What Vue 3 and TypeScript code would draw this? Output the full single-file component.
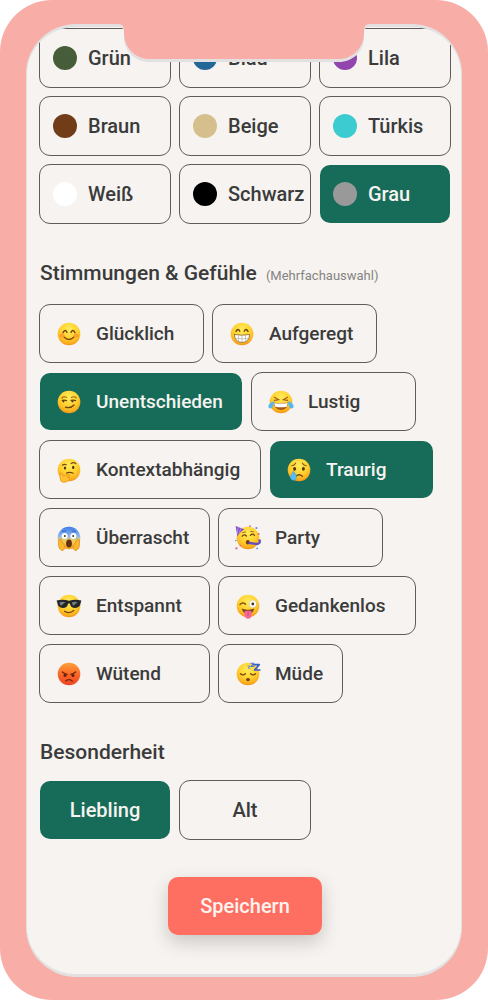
<script setup lang="ts">
import { ref } from 'vue'

type Width = 'small' | 'medium' | 'large' | 'wide' | 'wider' | 'widest'

interface Swatch {
  name: string
  color: string
}

interface Mood {
  name: string
  face: string
  width: Width
}

const swatches: Swatch[] = [
  { name: 'Grün', color: '#475d3a' },
  { name: 'Blau', color: '#236796' },
  { name: 'Lila', color: '#9145ad' },
  { name: 'Braun', color: '#703d18' },
  { name: 'Beige', color: '#d5bf8d' },
  { name: 'Türkis', color: '#3bcbd0' },
  { name: 'Weiß', color: '#ffffff' },
  { name: 'Schwarz', color: '#000000' },
  { name: 'Grau', color: '#999999' },
]

const moodRows: Mood[][] = [
  [
    { name: 'Glücklich', face: 'smile', width: 'medium' },
    { name: 'Aufgeregt', face: 'grin', width: 'medium' },
  ],
  [
    { name: 'Unentschieden', face: 'smirk', width: 'wider' },
    { name: 'Lustig', face: 'joy', width: 'medium' },
  ],
  [
    { name: 'Kontextabhängig', face: 'thinking', width: 'widest' },
    { name: 'Traurig', face: 'cry', width: 'medium' },
  ],
  [
    { name: 'Überrascht', face: 'scream', width: 'large' },
    { name: 'Party', face: 'party', width: 'medium' },
  ],
  [
    { name: 'Entspannt', face: 'cool', width: 'large' },
    { name: 'Gedankenlos', face: 'wink', width: 'wide' },
  ],
  [
    { name: 'Wütend', face: 'angry', width: 'large' },
    { name: 'Müde', face: 'sleep', width: 'small' },
  ],
]

const traits = ['Liebling', 'Alt']

const selected = ref<Set<string>>(new Set(['Grau', 'Unentschieden', 'Traurig', 'Liebling']))

function toggle(name: string): void {
  if (selected.value.has(name)) selected.value.delete(name)
  else selected.value.add(name)
}

function faceFill(face: string): string {
  if (face === 'angry') return 'url(#face-red)'
  if (face === 'scream') return 'url(#face-blue)'
  return 'url(#face-yellow)'
}
</script>

<template>
  <div class="phone">
    <svg class="defs" width="0" height="0" aria-hidden="true">
      <defs>
        <radialGradient id="face-yellow" cx="0.5" cy="0.3" r="0.72">
          <stop offset="0" stop-color="#ffec5c" />
          <stop offset="0.55" stop-color="#ffd02f" />
          <stop offset="0.85" stop-color="#fbad1c" />
          <stop offset="1" stop-color="#ee8b1a" />
        </radialGradient>
        <linearGradient id="face-red" x1="0" y1="0" x2="0" y2="1">
          <stop offset="0" stop-color="#ffa03a" />
          <stop offset="0.5" stop-color="#fa6a28" />
          <stop offset="1" stop-color="#ef4323" />
        </linearGradient>
        <linearGradient id="face-blue" x1="0" y1="0" x2="0" y2="1">
          <stop offset="0" stop-color="#3f79e6" />
          <stop offset="0.4" stop-color="#86b4ee" />
          <stop offset="0.62" stop-color="#f5cf55" />
          <stop offset="1" stop-color="#f7a01e" />
        </linearGradient>
      </defs>
    </svg>

    <svg class="notch" width="256" height="44" viewBox="0 0 256 44" aria-hidden="true">
      <path
        class="notch-rim"
        d="M0 4V7H3Q8 7 8 13V17C8 32 20 42 33 42H223C236 42 248 32 248 17V13Q248 7 253 7H256V4Z"
      />
      <path
        class="notch-body"
        d="M0 0V4H2Q8 4 8 10V13C8 28 20 39 33 39H223C236 39 248 28 248 13V10Q248 4 254 4H256V0Z"
      />
    </svg>

    <main class="screen">
      <section class="swatches" aria-label="Farben">
        <button
          v-for="swatch in swatches"
          :key="swatch.name"
          type="button"
          class="chip swatch"
          :class="{ active: selected.has(swatch.name) }"
          :aria-pressed="selected.has(swatch.name)"
          @click="toggle(swatch.name)"
        >
          <span class="dot" :style="{ background: swatch.color }"></span>
          <span>{{ swatch.name }}</span>
        </button>
      </section>

      <section class="group">
        <h2>Stimmungen &amp; Gefühle <small>(Mehrfachauswahl)</small></h2>
        <div class="rows">
          <div v-for="(row, index) in moodRows" :key="index" class="row">
            <button
              v-for="mood in row"
              :key="mood.name"
              type="button"
              class="chip mood"
              :class="[mood.width, { active: selected.has(mood.name) }]"
              :aria-pressed="selected.has(mood.name)"
              @click="toggle(mood.name)"
            >
              <svg class="face" viewBox="0 0 26 26" fill="none" stroke-linecap="round" aria-hidden="true">
                <circle cx="13" cy="13" r="11.3" :fill="faceFill(mood.face)" />

                <g v-if="mood.face === 'smile'">
                  <ellipse cx="6" cy="14.5" rx="2.6" ry="2" fill="#fb7c2c" opacity="0.55" />
                  <ellipse cx="20" cy="14.5" rx="2.6" ry="2" fill="#fb7c2c" opacity="0.55" />
                  <path d="M7 11.6Q9.2 7.6 11 11.4M15 11.4Q17 7.6 19 11.6" stroke="#70430f" stroke-width="1.4" />
                  <path d="M8.2 16.3Q13 20.6 17.8 16.3" stroke="#80450f" stroke-width="1.3" />
                </g>

                <g v-else-if="mood.face === 'grin'">
                  <path d="M7 10.4Q9 6.6 10.8 10.2M15.2 10.2Q17 6.6 19 10.4" stroke="#70430f" stroke-width="1.4" />
                  <path d="M5.4 13.5Q13 15 20.6 13.5Q20.4 21.4 13 21.4Q5.6 21.4 5.4 13.5Z" fill="#fff" stroke="#8c6428" stroke-width="0.8" />
                  <path d="M6.2 17.3Q13 18.6 19.8 17.3M9.5 14.4V20M13 14.6V21M16.5 14.4V20" stroke="#a9a49b" stroke-width="0.6" />
                </g>

                <g v-else-if="mood.face === 'smirk'">
                  <path d="M5.8 9Q8 6.8 10.6 8.5M15.4 8.5Q18 6.8 20.2 9" stroke="#a66112" stroke-width="1.1" />
                  <path d="M6.2 11.4Q8.4 10.6 10.6 11.6M15 11.4Q17.4 10.6 19.6 11.6" stroke="#70430f" stroke-width="1.2" />
                  <circle cx="7.4" cy="12.3" r="1.1" fill="#5a350f" />
                  <circle cx="16.4" cy="12.3" r="1.1" fill="#5a350f" />
                  <path d="M9.5 18.2Q14.6 19.8 18 16" stroke="#70430f" stroke-width="1.3" />
                </g>

                <g v-else-if="mood.face === 'joy'">
                  <path d="M6.4 8.2L10.6 10.6L6.4 11.4M19.6 8.2L15.4 10.6L19.6 11.4" stroke="#a15c10" stroke-width="1.2" />
                  <path d="M6 13.6Q13 14.8 20 13.6Q19.6 21 13 21Q6.4 21 6 13.6Z" fill="#a35a18" />
                  <path d="M6.4 13.9Q13 15 19.6 13.9L18.8 17.8Q13 18.8 7.2 17.8Z" fill="#fff" />
                  <path d="M6.2 12.6C4.8 12.4 0.6 14.4 0.4 17.2C0.3 20 4 20.2 4.9 17.6Q5.6 15.5 6.2 12.6Z" fill="#52b8f1" />
                  <path d="M19.8 12.6C21.2 12.4 25.4 14.4 25.6 17.2C25.7 20 22 20.2 21.1 17.6Q20.4 15.5 19.8 12.6Z" fill="#52b8f1" />
                </g>

                <g v-else-if="mood.face === 'thinking'">
                  <path d="M6.4 8.2Q8.2 6.8 10.3 7.8M15 6.6Q17.4 4.6 19.8 6.6" stroke="#7b4810" stroke-width="1.2" />
                  <ellipse cx="9" cy="11" rx="1.2" ry="1.6" fill="#5a350f" />
                  <ellipse cx="17.2" cy="10.4" rx="1.2" ry="1.6" fill="#5a350f" />
                  <path d="M10.5 16Q13.5 14.5 17.2 16.2" stroke="#70430f" stroke-width="1.2" />
                  <path d="M4.2 16.4Q5.8 14.8 6.6 17.2L7 19L12.2 17.4Q14.4 17.2 13.4 18.8L11 20Q14.6 20.2 13.4 22.2Q11.4 25.6 7.4 25.4Q4 25 4 21Z" fill="#ffc32f" stroke="#e8891b" stroke-width="0.7" />
                </g>

                <g v-else-if="mood.face === 'cry'">
                  <path d="M5.8 8.8Q8.4 8.4 9.6 6.2M20.2 8.8Q17.6 8.4 16.4 6.2" stroke="#8f530f" stroke-width="1.1" />
                  <ellipse cx="8.6" cy="11.8" rx="1.5" ry="1.9" fill="#5a350f" />
                  <ellipse cx="17.4" cy="11.8" rx="1.5" ry="1.9" fill="#5a350f" />
                  <path d="M9.8 19.2Q13 16.2 16.4 19.2" stroke="#70430f" stroke-width="1.3" />
                  <path d="M7.4 14.2Q10.8 18.4 10.4 20.8C9.8 24.2 4.6 24 4.5 20.6Q4.6 18 7.4 14.2Z" fill="#55bff5" stroke="#359cdd" stroke-width="0.5" />
                </g>

                <g v-else-if="mood.face === 'scream'">
                  <path d="M6.4 6.6Q8 5.4 9.8 6M16.2 6Q18 5.4 19.6 6.6" stroke="#305db0" stroke-width="0.9" />
                  <circle cx="8.6" cy="11" r="3" fill="#fff" />
                  <circle cx="17.4" cy="11" r="3" fill="#fff" />
                  <circle cx="8.8" cy="11" r="1" fill="#4b3420" />
                  <circle cx="17.2" cy="11" r="1" fill="#4b3420" />
                  <ellipse cx="13" cy="18.6" rx="2.9" ry="4" fill="#643013" />
                  <path d="M2.8 14.8Q5 13.4 6 15.6Q6.4 19 8.8 20.2Q9.6 23.6 7 25.6Q3.4 25.4 2.6 21Z" fill="#fbb72b" stroke="#df8a1c" stroke-width="0.7" />
                  <path d="M23.2 14.8Q21 13.4 20 15.6Q19.6 19 17.2 20.2Q16.4 23.6 19 25.6Q22.6 25.4 23.4 21Z" fill="#fbb72b" stroke="#df8a1c" stroke-width="0.7" />
                </g>

                <g v-else-if="mood.face === 'party'">
                  <path d="M0.6 1L9.6 4.6Q5.6 6 2.4 11.4Z" fill="#8050c6" />
                  <path d="M3.2 2.2L2.4 8.6M6.2 3.2L4.2 7.6" stroke="#b58ce6" stroke-width="1" />
                  <path d="M7.2 11.2Q9.4 8.6 11.4 11M15.4 10.4Q17.6 8 19.4 10.4" stroke="#70430f" stroke-width="1.3" />
                  <path d="M7.6 7.7L10.6 7M15.6 6.4L18.4 6.8" stroke="#a66112" stroke-width="0.9" />
                  <ellipse cx="12.8" cy="17.2" rx="1.9" ry="2.3" fill="#70391a" />
                  <path d="M14.6 18L22 19Q25.4 18.6 24.6 15.4" stroke="#6550b9" stroke-width="2.4" />
                  <g fill="#dc668f">
                    <circle cx="1.4" cy="23.4" r="1.1" />
                    <circle cx="15" cy="1.2" r="0.9" />
                    <circle cx="23.6" cy="9" r="1" />
                    <circle cx="5.4" cy="20.6" r="0.8" />
                  </g>
                  <g fill="#5a91df">
                    <circle cx="21.4" cy="3" r="1.1" />
                    <circle cx="22.2" cy="23.4" r="0.9" />
                    <circle cx="0.8" cy="15.6" r="0.8" />
                  </g>
                </g>

                <g v-else-if="mood.face === 'cool'">
                  <path d="M0.6 7.6Q7 6 13 7.8Q19 6 25.4 7.6L24.8 9.6Q24 15 19.2 15Q14.9 15 13.8 10.4H12.2Q11.1 15 6.8 15Q2 15 1.2 9.6Z" fill="#24262a" />
                  <path d="M3.6 9.2Q6.4 8.4 9.4 9.2L5 12.8Q3.6 11.4 3.6 9.2ZM16 9.2Q18.8 8.4 21.6 9.2L17.4 12.8Q16 11.4 16 9.2Z" fill="#777d83" />
                  <path d="M8.6 18.2Q13.6 21.4 17.8 17.4" stroke="#70430f" stroke-width="1.3" />
                </g>

                <g v-else-if="mood.face === 'wink'">
                  <path d="M5 11.6Q7.6 8.8 10.6 11.2" stroke="#85500f" stroke-width="1.4" />
                  <circle cx="17.8" cy="11" r="3.7" fill="#fff" stroke="#c9b78b" stroke-width="0.5" />
                  <circle cx="17.8" cy="11" r="1.4" fill="#4b321c" />
                  <path d="M6.8 15.6Q13 18 19.2 15.6Q18 21 13 21Q8 21 6.8 15.6Z" fill="#78401a" />
                  <path d="M9.6 18.2Q13 16.8 16.6 18.2V22.2Q16 25.8 13.1 25.8Q10.2 25.8 9.6 22.2Z" fill="#f6669a" />
                  <path d="M13.1 18.6V22.4" stroke="#cf3d74" stroke-width="0.8" />
                </g>

                <g v-else-if="mood.face === 'angry'">
                  <path d="M6.4 11Q8.8 13 11.2 13.4M19.6 11Q17.2 13 14.8 13.4" stroke="#76240c" stroke-width="1.4" />
                  <circle cx="9" cy="14.4" r="1.5" fill="#651f0e" />
                  <circle cx="17" cy="14.4" r="1.5" fill="#651f0e" />
                  <path d="M9.8 20Q13 17.4 16.2 20" stroke="#76240c" stroke-width="1.3" />
                </g>

                <g v-else-if="mood.face === 'sleep'">
                  <path d="M5.4 12.8Q8 15 10.4 12.8M15.6 12.8Q18 15 20.6 12.8" stroke="#70430f" stroke-width="1.3" />
                  <ellipse cx="13" cy="18.6" rx="1.9" ry="1.7" fill="#70391a" />
                  <path d="M18.8 3.6H24.2L19.6 9H24.8" stroke="#355cc8" stroke-width="1.7" stroke-linejoin="round" />
                  <path d="M15.8 2.2H18.6L16 5.4H18.8" stroke="#5079dd" stroke-width="1.1" />
                  <path d="M12.8 5H14.8L13 7.2H15" stroke="#6588d7" stroke-width="0.9" />
                </g>
              </svg>
              <span>{{ mood.name }}</span>
            </button>
          </div>
        </div>
      </section>

      <section class="group">
        <h2>Besonderheit</h2>
        <div class="row">
          <button
            v-for="trait in traits"
            :key="trait"
            type="button"
            class="chip trait"
            :class="{ active: selected.has(trait) }"
            :aria-pressed="selected.has(trait)"
            @click="toggle(trait)"
          >
            {{ trait }}
          </button>
        </div>
      </section>

      <button type="button" class="save">Speichern</button>
    </main>
  </div>
</template>

<style>
body {
  margin: 0;
  background: #fff;
}
</style>

<style scoped>
.phone {
  position: relative;
  box-sizing: border-box;
  display: flex;
  min-height: 100vh;
  padding: 24px 26px 23px;
  border-radius: 52px;
  background: #f8ada6;
  color: #3b3b3b;
  font-family: Roboto, "Liberation Sans", sans-serif;
}

.defs {
  position: absolute;
}

.notch {
  position: absolute;
  top: 20px;
  left: 50%;
  transform: translateX(-50%);
}

.notch-body {
  fill: #f8ada6;
}

.notch-rim {
  fill: #e2e0e1;
}

.screen {
  box-sizing: border-box;
  flex: 1;
  min-width: 0;
  padding: 1px 10px 32px 12px;
  border: solid #e2e0e1;
  border-width: 3px 1px;
  border-radius: 50px;
  background: #f6f3f0;
  overflow: hidden;
}

.chip {
  box-sizing: border-box;
  display: flex;
  align-items: center;
  height: 60px;
  padding: 0;
  border: 1px solid #5e5d5c;
  border-radius: 11px;
  background: transparent;
  background-clip: padding-box;
  color: inherit;
  font: 500 20px/24px Roboto, "Liberation Sans", sans-serif;
  white-space: nowrap;
  cursor: pointer;
}

.chip.active {
  border-color: transparent;
  background-color: #166c58;
  color: #f6f3f0;
}

.swatches {
  display: grid;
  grid-template-columns: repeat(3, 1fr);
  gap: 8px;
}

.swatch {
  gap: 11px;
  padding-left: 13px;
}

.dot {
  flex: none;
  width: 24px;
  height: 24px;
  border-radius: 50%;
}

.group {
  margin-top: 37px;
}

h2 {
  margin: 0 0 16px 1px;
  font-size: 21px;
  font-weight: 500;
  line-height: 24px;
}

small {
  margin-left: 4px;
  color: #858381;
  font-size: 13px;
  font-weight: 400;
}

.rows {
  display: grid;
  gap: 8px;
}

.row {
  display: flex;
  gap: 8px;
}

.mood {
  gap: 14px;
  height: 59px;
  padding-left: 16px;
  font-size: 19px;
}

.face {
  flex: none;
  width: 26px;
  height: 26px;
}

.small {
  width: 125px;
}

.medium {
  width: 165px;
}

.large {
  width: 171px;
}

.wide {
  width: 198px;
}

.wider {
  width: 204px;
}

.widest {
  width: 222px;
}

.trait {
  justify-content: center;
  width: 132px;
}

.rows {
  gap: 9px;
}

.save {
  display: block;
  height: 58px;
  margin: 37px auto 0;
  padding: 0 32px;
  border: 0;
  border-radius: 10px;
  background: #ff6f61;
  box-shadow: 0 7px 18px rgba(60, 60, 60, 0.24);
  color: #fbf3f0;
  font: 500 20px/24px Roboto, "Liberation Sans", sans-serif;
  cursor: pointer;
}
</style>
